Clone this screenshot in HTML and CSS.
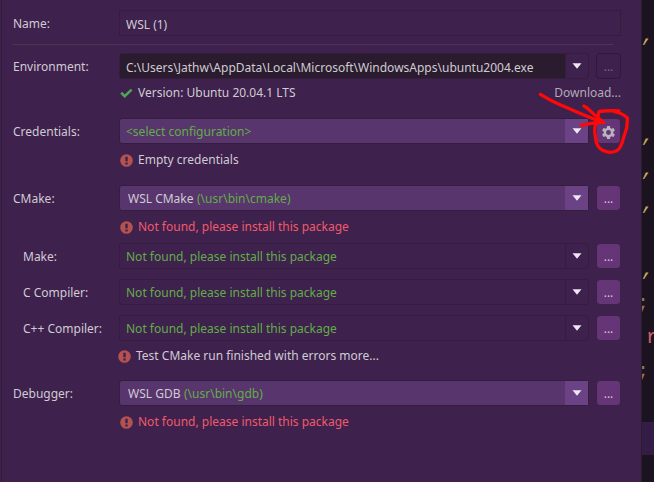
FILE: index.html
```html
<!DOCTYPE html>
<html lang="en">
<head>
<meta charset="utf-8">
<meta name="viewport" content="width=device-width, initial-scale=1">
<title>Toolchains</title>
<link rel="stylesheet" href="styles.css">
</head>
<body>
<svg class="defs" aria-hidden="true">
  <symbol id="error" viewBox="0 0 13 13"><circle cx="6.5" cy="6.5" r="6.3" fill="#b4524f"/><path d="M5.3 2.7h2.4v4.6H5.3zM5.3 8.4h2.4v2H5.3z" fill="#3e214d"/></symbol>
  <symbol id="arrow" viewBox="0 0 10 6"><path d="M.5 .3h9L5 5.7z" fill="#eee6f5"/></symbol>
</svg>
<div class="window">
  <form class="panel">
    <div class="row">
      <label class="name" for="name">Name:</label>
      <input class="text wide" id="name" value="WSL (1)">
    </div>
    <hr>
    <div class="row">
      <label class="name" for="env">Environment:</label>
      <div class="combo editable">
        <input class="text" id="env" value="C:\Users\Jathw\AppData\Local\Microsoft\WindowsApps\ubuntu2004.exe">
        <button type="button" class="drop" aria-label="Show environments"><svg><use href="#arrow"/></svg></button>
      </div>
      <button type="button" class="more" disabled>...</button>
    </div>
    <div class="note version">
      <svg viewBox="0 0 13 13"><path d="M1.2 5.8 4.7 9.2 11.6 2.6" fill="none" stroke="#4fa35a" stroke-width="2.6"/></svg>
      <span>Version: Ubuntu 20.04.1 LTS</span>
      <a class="download" href="#">Download...</a>
    </div>
    <div class="row">
      <label class="name" for="cred">Credentials:</label>
      <div class="combo filled">
        <select class="green" id="cred"><option>&lt;select configuration&gt;</option></select>
        <span class="drop"><svg><use href="#arrow"/></svg></span>
      </div>
      <div class="marked">
        <button type="button" class="more gear" aria-label="Credential settings">
          <svg viewBox="0 0 16 16"><path fill="#b9b4bd" fill-rule="evenodd" d="M6.5 1h3l.4 2.2 1.3.8 2.1-.8 1.5 2.6-1.7 1.4v1.6l1.7 1.4-1.5 2.6-2.1-.8-1.3.8L9.500 15h-3l-.4-2.200-1.300-.8-2.100.8-1.500-2.600 1.700-1.400V7.200L1.200 5.800l1.500-2.600 2.100.8 1.300-.8zM8 5.400a2.600 2.600 0 1 0 0 5.200 2.600 2.600 0 0 0 0-5.200z"/></svg>
        </button>
        <svg class="mark" viewBox="0 0 300 225" aria-hidden="true"><g fill="none" stroke="#fe0808" stroke-width="10" stroke-linecap="round" stroke-linejoin="round"><path d="M16 28Q48 48 82 62C120 79 160 97 204 112"/><path d="M147 63C164 72 171 85 181 91L204 112M138 121C160 119 175 110 207 112"/><path d="M252 78C230 77 210 76 192 80L188 98C182 115 178 122 179 140C182 155 180 172 190 184C198 197 210 199 226 202C240 201 250 198 255 187C265 171 265 156 271 142C279 125 276 112 277 99C266 87 246 81 235 79"/></g></svg>
      </div>
    </div>
    <div class="note tall"><svg><use href="#error"/></svg><span>Empty credentials</span></div>
    <div class="row">
      <label class="name" for="cmake">CMake:</label>
      <div class="combo filled">
        <select class="tool" id="cmake"><option>WSL CMake</option></select>
        <span class="path">(\usr\bin\cmake)</span>
        <span class="drop"><svg><use href="#arrow"/></svg></span>
      </div>
      <button type="button" class="more">...</button>
    </div>
    <div class="note"><svg><use href="#error"/></svg><span class="red">Not found, please install this package</span></div>
    <div class="subtools">
      <div class="row">
        <label class="name" for="make">Make:</label>
        <div class="combo">
          <select class="green" id="make"><option>Not found, please install this package</option></select>
          <span class="drop"><svg><use href="#arrow"/></svg></span>
        </div>
        <button type="button" class="more">...</button>
      </div>
      <div class="row">
        <label class="name" for="cc">C Compiler:</label>
        <div class="combo">
          <select class="green" id="cc"><option>Not found, please install this package</option></select>
          <span class="drop"><svg><use href="#arrow"/></svg></span>
        </div>
        <button type="button" class="more">...</button>
      </div>
      <div class="row">
        <label class="name" for="cxx">C++ Compiler:</label>
        <div class="combo">
          <select class="green" id="cxx"><option>Not found, please install this package</option></select>
          <span class="drop"><svg><use href="#arrow"/></svg></span>
        </div>
        <button type="button" class="more">...</button>
      </div>
    </div>
    <div class="note tall result"><svg><use href="#error"/></svg><span>Test CMake run finished with errors <a href="#">more...</a></span></div>
    <div class="row">
      <label class="name" for="gdb">Debugger:</label>
      <div class="combo filled">
        <select class="tool" id="gdb"><option>WSL GDB</option></select>
        <span class="path">(\usr\bin\gdb)</span>
        <span class="drop"><svg><use href="#arrow"/></svg></span>
      </div>
      <button type="button" class="more">...</button>
    </div>
    <div class="note"><svg><use href="#error"/></svg><span class="red">Not found, please install this package</span></div>
  </form>
  <div class="editor">
    <div class="lines">
      <i></i><i>,</i><i></i><i></i><i>,</i><i>,</i><i>,</i><i></i><i>,</i><i class="semi">;</i><i class="ident">r</i><i class="semi">;</i><i></i><i class="current"></i><i></i>
    </div>
  </div>
</div>
</body>
</html>
```
FILE: styles.css
```css
* { box-sizing: border-box; }
body {
  margin: 0;
  background: #3e214d;
  color: #d0cbd3;
  font: 12px/16px "Noto Sans", "Open Sans", sans-serif;
}
input, select, button { font: inherit; color: inherit; margin: 0; }
a { color: inherit; text-decoration: none; }
.defs { display: none; }
.window {
  display: grid;
  grid-template-columns: 1fr 13px;
  height: 100vh;
  overflow: hidden;
}
.panel {
  margin-left: 1px;
  padding: 10px 20px 20px 10px;
  border-left: 1px solid #321c3c;
}
.row {
  display: grid;
  grid-template-columns: 107px 1fr 25px;
  height: 26px;
  align-items: center;
}
hr {
  height: 1px;
  margin: 8px 8px 8px 0;
  border: 0;
  background: #513453;
}
.name { padding: 2px 0 0 1px; }
.path { padding-top: 2px; }
.text {
  height: 26px;
  min-width: 0;
  padding: 2px 6px 0;
  border: 1px solid #351d3e;
  background: #3e214d;
  outline: none;
}
.wide { grid-column: 2 / 4; }
.combo {
  display: flex;
  align-items: center;
  height: 26px;
  margin-right: 7px;
  border: 1px solid #351d3e;
  border-radius: 3px;
}
.editable .text {
  flex: 1;
  height: 24px;
  border: 0;
  background: #2a1b2e;
}
.combo select {
  height: 24px;
  padding: 2px 0 0 6px;
  border: 0;
  background: transparent;
  appearance: none;
  outline: none;
}
.combo .green { flex: 1; min-width: 0; }
.combo .tool { padding-left: 8px; }
.green, .path { color: #62ad48; }
.path { margin-left: 3px; }
.drop {
  display: flex;
  align-items: center;
  justify-content: center;
  width: 23px;
  height: 24px;
  margin-left: auto;
  padding: 0;
  border: 0;
  border-left: 1px solid #351d3e;
  background: transparent;
  pointer-events: none;
}
.drop svg { width: 10px; height: 6px; }
.filled { background: #58356d; }
.filled .drop { background: #6a4285; border-left-color: #6a4285; }
.more {
  display: flex;
  align-items: center;
  justify-content: center;
  width: 25px;
  height: 26px;
  padding: 2px 0 0;
  border: 1px solid #3a2344;
  border-radius: 4px;
  background: #653577;
}
.more:disabled {
  border: 1px solid #30193a;
  background: transparent;
  color: #79677f;
}
.gear svg { width: 15px; height: 15px; }
.marked { position: relative; }
.mark {
  position: absolute;
  left: -61px;
  top: -33px;
  width: 100px;
  height: 75px;
  pointer-events: none;
}
.note {
  display: flex;
  align-items: center;
  gap: 5px;
  height: 32px;
  padding-left: 108px;
}
.note svg { width: 13px; height: 13px; }
.version { height: 28px; margin-bottom: 11px; }
.tall { height: 32px; margin-bottom: 9px; }
.result { height: 30px; padding-left: 106px; }
.download { margin-left: auto; color: #b4a9b9; }
.red { color: #f05b6b; }
.subtools { display: grid; gap: 10px; }
.subtools .name { padding-left: 11px; }
.editor {
  overflow: hidden;
  border-left: 1px solid #2a1b2e;
  background: #1c1320;
}
.lines {
  display: grid;
  grid-template-rows: repeat(15, 1fr);
  height: calc(100% + 20px);
  margin-top: -14px;
}
.lines i {
  display: flex;
  align-items: center;
  height: 100%;
  color: #c9a75c;
  font: italic 20px/34px "Liberation Mono", monospace;
}
.lines i.semi { margin-left: -5px; font-style: normal; color: #8d7a4e; }
.lines i.ident { margin-left: 4px; font-style: normal; color: #d0626b; }
.lines i.current { background: #331d47; }
```
